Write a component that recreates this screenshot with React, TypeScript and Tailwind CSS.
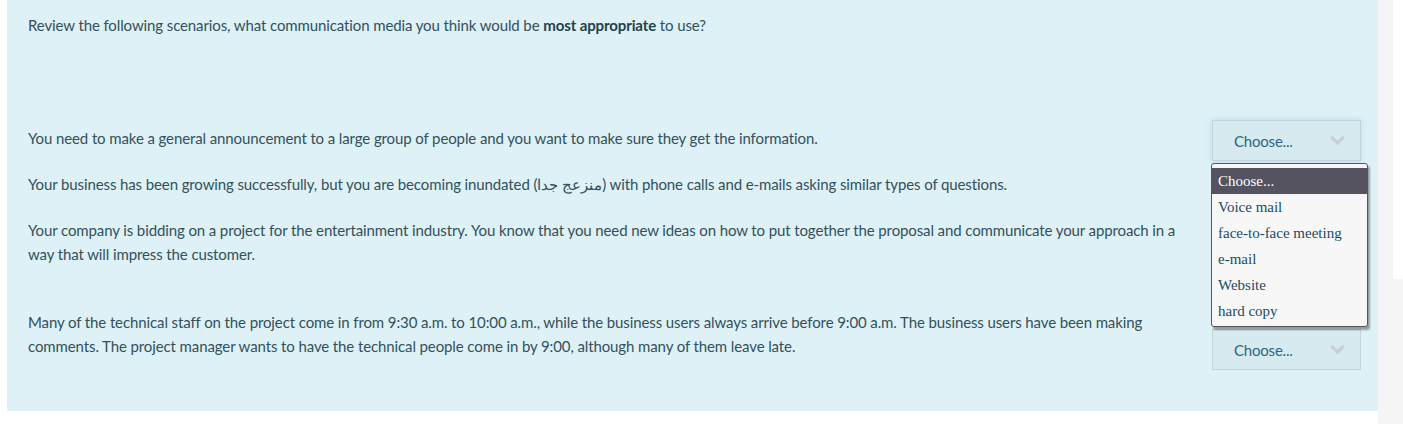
import { ChevronDown } from 'lucide-react'

const options = ['Choose...', 'Voice mail', 'face-to-face meeting', 'e-mail', 'Website', 'hard copy']

function Select({ focused }: { focused?: boolean }) {
  return (
    <div
      className={`w-[149px] h-[41px] shrink-0 flex items-center justify-between pl-[21px] pr-[12px] bg-[#d6eaf0] border border-[#c4d3d8] text-[15px] tracking-[-0.2px] text-[#2d6684] ${
        focused ? 'shadow-[0_0_5px_1px_#b8e2f4]' : ''
      }`}
    >
      <span>Choose...</span>
      <ChevronDown size={21} strokeWidth={4} className="text-[#c9cfd2]" />
    </div>
  )
}

export default function App() {
  return (
    <div className="flex h-[424px] w-[1403px] font-['Lato','Liberation_Sans',sans-serif]">
      <div className="w-[1378px] bg-white">
        <div className="ml-[7px] w-[1371px] h-[411px] bg-[#def1f7] pl-[21px] pt-[13px] text-[15px] tracking-[-0.11px] leading-6 text-[#33505b]">
          <p className="h-[107px]">
            Review the following scenarios, what communication media you think would be{' '}
            <b className="text-[#23414c]">most appropriate</b> to use?
          </p>

          {/* rows */}
          <div className="flex h-[46px]">
            <p className="w-[1160px] mr-[24px] pt-[6px]">
              You need to make a general announcement to a large group of people and you want to make sure they get the information.
            </p>
            <div className="relative">
              <Select focused />
              {/* open menu */}
              <div className="absolute left-[-1px] top-[43px] w-[157px] h-[164px] bg-[#f7f7f7] border border-[#55555c] rounded-[3px] shadow-[2px_3px_2px_rgba(0,0,0,0.35)] pt-[4px] font-['Liberation_Serif',serif] text-[15px] tracking-normal z-10">
                {options.map((o, i) => (
                  <div
                    key={o}
                    className={`h-[26px] leading-[26px] pl-[6px] ${
                      i === 0 ? 'bg-[#55535f] text-white' : 'text-[#1d4b63]'
                    }`}
                  >
                    {o}
                  </div>
                ))}
              </div>
            </div>
          </div>

          <div className="flex h-[46px]">
            <p className="w-[1160px] mr-[24px] pt-[6px]">
              Your business has been growing successfully, but you are becoming inundated (<span dir="rtl">منزعج جدا</span>) with phone calls and e-mails asking similar types of questions.
            </p>
            <Select />
          </div>

          <div className="flex h-[92px]">
            <p className="w-[1160px] mr-[24px] pt-[6px]">
              Your company is bidding on a project for the entertainment industry. You know that you need new ideas on how to put together the proposal and communicate your approach in a way that will impress the customer.
            </p>
            <Select />
          </div>

          <div className="flex">
            <p className="w-[1160px] mr-[24px] pt-[6px]">
              Many of the technical staff on the project come in from 9:30 a.m. to 10:00 a.m., while the business users always arrive before 9:00 a.m. The business users have been making comments. The project manager wants to have the technical people come in by 9:00, although many of them leave late.
            </p>
            <div className="pt-[25px]">
              <Select />
            </div>
          </div>
        </div>
      </div>
      <div className="w-[25px] bg-[#f5f5f5]">
        <div className="ml-[15px] h-[279px] bg-white" />
      </div>
    </div>
  )
}
